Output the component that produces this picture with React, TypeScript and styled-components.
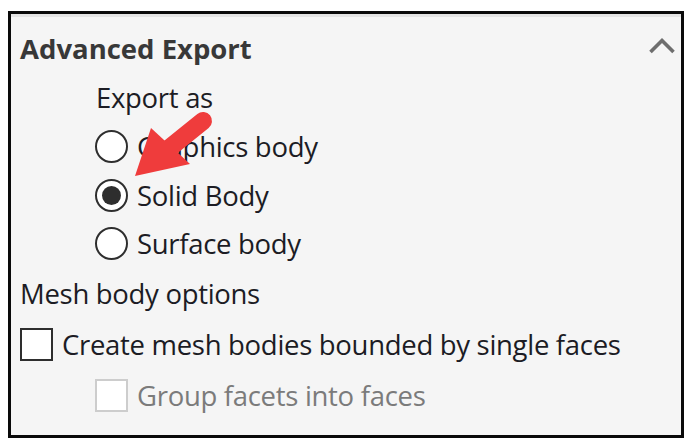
import React from "react";
import styled, { createGlobalStyle } from "styled-components";

const Global = createGlobalStyle`
  html, body { margin: 0; padding: 0; background: #ffffff; }
  body { font-family: "Open Sans", "Noto Sans", sans-serif; }
`;

const Frame = styled.div`
  position: relative;
  box-sizing: border-box;
  margin: 11px 0 0 8px;
  width: 676px;
  height: 427px;
  border: 3px solid #0a0a0a;
  background: #f5f5f5;
  display: flex;
  flex-direction: column;
`;

const TopLine = styled.div`
  height: 3px;
  background: #e4e4e4;
  flex: none;
`;

const Body = styled.div`
  padding: 7px 5px 0 9px;
  display: flex;
  flex-direction: column;
`;

const Row = styled.div<{ $indent?: number; $h?: number }>`
  display: flex;
  align-items: center;
  height: ${(p) => p.$h ?? 49}px;
  padding-left: ${(p) => p.$indent ?? 0}px;
  gap: 9px;
`;

const HeadRow = styled(Row)`
  justify-content: space-between;
`;

const Heading = styled.span`
  font-weight: 700;
  font-size: 27.5px;
  color: #383838;
  letter-spacing: 0px;
`;

const Label = styled.span<{ $disabled?: boolean }>`
  font-size: 27.5px;
  color: ${(p) => (p.$disabled ? "#7b7b7b" : "#1c1c24")};
  letter-spacing: -0.3px;
`;

const Radio = styled.span<{ $checked?: boolean }>`
  box-sizing: border-box;
  width: 33px;
  height: 33px;
  border-radius: 50%;
  border: 2px solid #2e2e2e;
  background: #ffffff;
  display: flex;
  align-items: center;
  justify-content: center;
  flex: none;
  &::after {
    content: "";
    display: ${(p) => (p.$checked ? "block" : "none")};
    width: 19px;
    height: 19px;
    border-radius: 50%;
    background: #2e2e2e;
  }
`;

const Check = styled.span<{ $disabled?: boolean }>`
  box-sizing: border-box;
  width: 33px;
  height: 33px;
  border: 2px solid ${(p) => (p.$disabled ? "#cdcdcd" : "#2e2e2e")};
  background: #ffffff;
  flex: none;
`;

const Chevron = styled.svg`
  width: 28px;
  height: 18px;
  margin-bottom: 5px;
`;

const Arrow = styled.svg`
  position: absolute;
  left: 115px;
  top: 90px;
  width: 110px;
  height: 100px;
  pointer-events: none;
`;

export default function App() {
  return (
    <>
      <Global />
      <Frame>
        <TopLine />
        <Body>
          <HeadRow>
            <Heading>Advanced Export</Heading>
            <Chevron viewBox="0 0 28 18">
              <polyline
                points="2.5,15 14,3.5 25.5,15"
                fill="none"
                stroke="#6e6e6e"
                strokeWidth="3.6"
              />
            </Chevron>
          </HeadRow>
          <Row $indent={76}>
            <Label>Export as</Label>
          </Row>
          <Row $indent={75}>
            <Radio />
            <Label>Graphics body</Label>
          </Row>
          <Row $indent={75} $h={48}>
            <Radio $checked />
            <Label>Solid Body</Label>
          </Row>
          <Row $indent={75}>
            <Radio />
            <Label>Surface body</Label>
          </Row>
          <Row $h={51}>
            <Label>Mesh body options</Label>
          </Row>
          <Row $h={51}>
            <Check />
            <Label>Create mesh bodies bounded by single faces</Label>
          </Row>
          <Row $indent={75} $h={51}>
            <Check $disabled />
            <Label $disabled>Group facets into faces</Label>
          </Row>
        </Body>
        <Arrow viewBox="126 104 110 100">
          <line
            x1="167"
            y1="150"
            x2="203"
            y2="121"
            stroke="#ef3c3c"
            strokeWidth="18"
            strokeLinecap="round"
          />
          <polygon points="135,176 151,128 190,164" fill="#ef3c3c" />
        </Arrow>
      </Frame>
    </>
  );
}
